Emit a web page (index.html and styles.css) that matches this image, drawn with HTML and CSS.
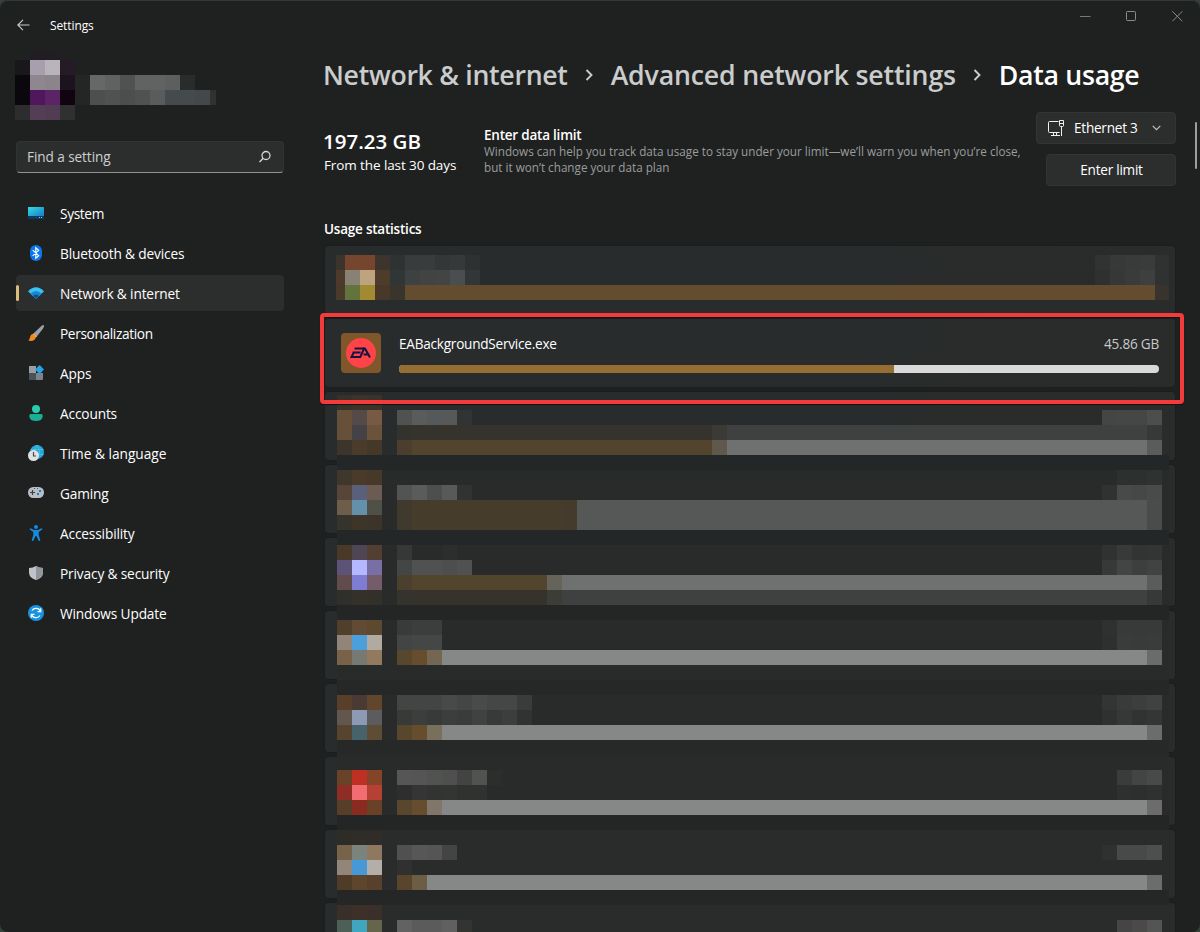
FILE: index.html
```html
<!DOCTYPE html>
<html lang="en">
<head>
<meta charset="utf-8">
<title>Settings</title>
<link rel="stylesheet" href="styles.css">
</head>
<body>
<div class="window">
  <aside class="sidebar">
    <header class="titlebar">
      <svg class="back" width="14" height="12" viewBox="0 0 14 12"><path d="M6 .8.8 6 6 11.200M.8 6H12.500" fill="none" stroke="#c9caca" stroke-width="1.100"/></svg>
      <span class="app-name">Settings</span>
    </header>
    <svg class="profile" id="profile" viewBox="15 52 202 69" width="202" height="69" shape-rendering="crispEdges"></svg>
    <div class="search">
      <span class="search-text">Find a setting</span>
      <svg width="14" height="14" viewBox="0 0 14 14"><circle cx="8" cy="5.500" r="4" fill="none" stroke="#d5d6d6" stroke-width="1.300"/><path d="M5 8.500 1.500 12" stroke="#d5d6d6" stroke-width="1.400"/></svg>
    </div>
    <nav class="nav">
      <a class="item tight"><svg viewBox="0 0 16 16"><defs><linearGradient id="gs" x2="1" y2="1"><stop stop-color="#38dbe5"/><stop offset="1" stop-color="#157cc5"/></linearGradient></defs><path fill="url(#gs)" d="M0 2.500Q0 2 .5 2h15q.5 0 .5.500V11H0z"/><path fill="#0b3d60" d="M0 11h16v2.500q0 .500-.5.500H.5Q0 14 0 13.500z"/><path d="M11 12h1v1h-1zM13 12h1v1h-1z" fill="#8cc7e8"/></svg><span>System</span></a>
      <a class="item"><svg viewBox="0 0 16 16"><rect x="2" width="12" height="16" rx="6" fill="#0a78ec"/><path d="m4.700 5.200 6 5.500L7.800 13.200V2.800l2.900 2.500-6 5.500" fill="none" stroke="#fff" stroke-width="1.150"/></svg><span>Bluetooth &amp; devices</span></a>
      <a class="item active"><svg viewBox="0 0 16 16"><path d="M0 6.200Q8-1.800 16 6.200L8 14z" fill="#38c3f3"/><path d="M2.500 8.500Q8 3.500 13.500 8.500L8 14z" fill="#1787d2"/><path d="M5 11q3-2.800 6 0l-3 3z" fill="#124f91"/></svg><span>Network &amp; internet</span></a>
      <a class="item tight"><svg viewBox="0 0 16 16"><path d="M15.700.3c.9.900-.2 2.400-1 3.700L9 11.300 5.700 8.200 12.300 2c1.200-1 2.400-2.400 3.400-1.700z" fill="#9aa1a6"/><path d="m5.700 8.200 3.300 3.100-1.500 1.400L4.500 9.500z" fill="#d6d8d9"/><path d="M4.800 9c1.800 0 3 1.500 2.900 3.200C7.500 15.300 4 16.700.3 15.500 2.500 14 1.600 9.400 4.800 9z" fill="#f18a1d"/></svg><span>Personalization</span></a>
      <a class="item"><svg viewBox="0 0 16 16"><path d="M1 1h7v7H1z" fill="#979ea5"/><path d="M1 8h7v7H2q-1 0-1-1z" fill="#4b5156"/><path d="M8 8h7v6q0 1-1 1H8z" fill="#7b838b"/><rect x="8.400" y="1.300" width="6.400" height="6.400" rx=".8" transform="rotate(45 11.600 4.500)" fill="#26a4ea"/></svg><span>Apps</span></a>
      <a class="item"><svg viewBox="0 0 16 16"><circle cx="8" cy="4" r="4" fill="#2bcbb0"/><path d="M2.500 9h11Q15 9 14.700 11.500 14 16 8 16T1.300 11.500Q1 9 2.500 9z" fill="#1bae97"/></svg><span>Accounts</span></a>
      <a class="item loose"><svg viewBox="0 0 16 16"><circle cx="9" cy="7" r="7" fill="#25a7d9"/><path d="M9 0q-5 7 0 14M9 0q5 7 0 14M2.500 4.500h13M2.500 9.500h13" fill="none" stroke="#50c4e5" stroke-width=".8"/><circle cx="5.500" cy="10.500" r="5.500" fill="#e0e1e2"/><path d="M5.500 7v4H8" fill="none" stroke="#44494d" stroke-width="1.200"/></svg><span>Time &amp; language</span></a>
      <a class="item"><svg viewBox="0 0 16 16"><rect y="2" width="16" height="11" rx="5.200" fill="#b8bec4"/><path d="M4.500 5v5M2 7.500h5" stroke="#3b4146" stroke-width="1.200"/><path d="M6 3h1v1H6zM9 3h1v1H9z" fill="#4a5157"/><path d="M11 5h2v2h-2zM9 8h2v2H9z" fill="#1680d0"/></svg><span>Gaming</span></a>
      <a class="item"><svg viewBox="0 0 16 16"><circle cx="8" cy="2" r="2" fill="#168add"/><path d="M2.600 3.300 6 5h4l3.400-1.700q1.200 0 .8 1.200L10.700 7v3l1.600 5.200q-.5 1.100-1.700.6L8.500 11h-1l-2.100 4.800q-1.200.5-1.700-.6L5.300 10V7L1.800 4.500q-.4-1.200.8-1.200z" fill="#168add"/></svg><span>Accessibility</span></a>
      <a class="item"><svg viewBox="0 0 16 16"><path d="M8 1q3 2 7 2v4.500Q15 13 8 15 1 13 1 7.500V3q4 0 7-2z" fill="#c0c4c9"/><path d="M8 1q3 2 7 2v4.500Q15 13 8 15z" fill="#92979d"/></svg><span>Privacy &amp; security</span></a>
      <a class="item"><svg viewBox="0 0 16 16"><circle cx="8" cy="8" r="8" fill="#1693e3"/><path d="M12.500 6.500A4.800 4.800 0 0 0 4 5.500m-.5 4A4.800 4.800 0 0 0 12 10.500M12.700 3.300v3.300H9.500M3.300 12.700V9.400h3.200" fill="none" stroke="#fff" stroke-width="1.200"/></svg><span>Windows Update</span></a>
    </nav>
  </aside>
  <main class="main">
    <div class="caption-buttons">
      <svg width="11" height="11" viewBox="0 0 11 11"><path d="M0 5.500h10.500" stroke="#777979"/></svg>
      <svg width="11" height="11" viewBox="0 0 11 11"><rect x=".5" y=".5" width="9" height="9" rx=".8" fill="none" stroke="#898a8a"/></svg>
      <svg width="11" height="11" viewBox="0 0 11 11"><path d="m.3.300 10 10m0-10-10 10" stroke="#898a8a"/></svg>
    </div>
    <h1 class="crumbs">
      <span class="c1">Network &amp; internet</span>
      <svg class="sep" width="9" height="12" viewBox="0 0 9 12"><path d="m1.500 1 5 5-5 5" fill="none" stroke="#cbcccc" stroke-width="1.900"/></svg>
      <span class="c2">Advanced network settings</span>
      <svg class="sep" width="9" height="12" viewBox="0 0 9 12"><path d="m1.500 1 5 5-5 5" fill="none" stroke="#cbcccc" stroke-width="1.900"/></svg>
      <span class="c3">Data usage</span>
    </h1>
    <section class="summary">
      <div class="total"><div class="amount">197.23 GB</div><div class="period">From the last 30 days</div></div>
      <div class="limit"><div class="limit-title">Enter data limit</div><p><span>Windows can help you track data usage to stay under your limit—we’ll warn you when you’re close,</span><br><span>but it won’t change your data plan</span></p></div>
      <div class="actions">
        <button class="btn adapter"><svg width="17" height="17" viewBox="0 0 17 17"><path d="M10.500 1.500H1.500q-1 0-1 1v9q0 1 1 1h10M5.500 12.500v3M3 15.500h9M8.500 12.500v3M11.500.5h4v5q0 1-1 1h-2q-1 0-1-1zM12 3.500h3M13.500 6.500V16" fill="none" stroke="#eeefef"/></svg><span>Ethernet 3</span><svg width="9" height="6" viewBox="0 0 9 6"><path d="m.7.800 3.800 3.800L8.300.8" fill="none" stroke="#c5c6c6" stroke-width="1.100"/></svg></button>
        <button class="btn enter"><span>Enter limit</span></button>
      </div>
    </section>
    <h2 class="stats-title">Usage statistics</h2>
    <section class="list">
      <div class="card"></div>
      <div class="card featured">
        <div class="app-icon"><svg width="30" height="30" viewBox="0 0 30 30"><circle cx="15" cy="15" r="15" fill="#ff4448"/><path d="M8.500 10.500h9M6.500 14.500h8M18.500 9.500 14.300 18.900H5.500L7.500 15M18.700 10l5.300 9.500M17.500 16.500h6" fill="none" stroke="#141345" stroke-width="2"/></svg></div>
        <div class="usage">
          <div class="usage-head"><span class="exe">EABackgroundService.exe</span><span class="size">45.86 GB</span></div>
          <div class="bar"><div class="fill"></div></div>
        </div>
      </div>
      <div class="card"></div><div class="card"></div><div class="card"></div><div class="card"></div><div class="card"></div><div class="card"></div><div class="card"></div><div class="card"></div>
      <svg class="mosaic" id="mosaic" viewBox="325 246 850 686" width="850" height="686" shape-rendering="crispEdges"></svg>
      <div class="highlight"></div>
    </section>
  </main>
  <div class="scroll-thumb"></div>
</div>
<script src="mosaic.js"></script>
</body>
</html>
```

FILE: styles.css
```css
* { box-sizing: border-box; }
body { margin: 0; background: #35423a; font-family: "Open Sans", "Noto Sans", sans-serif; color: #fff; }
.window { position: relative; display: flex; width: 1200px; height: 932px; overflow: hidden; border-radius: 8px; background: #1f2121; box-shadow: inset 0 1px #343838; }
.sidebar { width: 300px; flex: none; padding-left: 16px; }
.titlebar { display: flex; align-items: center; height: 48px; padding: 1px 0 0 1px; }
.back { margin-right: 19px; }
.app-name { padding-top: 1px; font-size: 12px; letter-spacing: -.1px; }
.profile { display: block; margin: 4px 0 0 -1px; }
.search { display: flex; align-items: center; justify-content: space-between; width: 268px; height: 32px; margin-top: 20px; padding: 0 11px 0 10px; border: 1px solid #303333; border-bottom-color: #929494; border-radius: 4px; background: #2c2e2e; font-size: 13.600px; letter-spacing: -.08px; color: #cecfcf; }
.search-text { padding-bottom: 2px; }
.nav { display: flex; flex-direction: column; gap: 4px; margin-top: 22px; }
.item { position: relative; display: flex; align-items: center; gap: 16px; width: 268px; height: 36px; padding: 2px 0 0 12px; border-radius: 4px; font-size: 13.700px; letter-spacing: -.15px; white-space: nowrap; }
.item.tight { letter-spacing: -.36px; }
.item.loose { letter-spacing: 0; }
.item svg { width: 16px; height: 16px; margin-top: -2px; }
.item span { padding-bottom: 2px; }
.active { background: #2c2e2e; }
.active::before { content: ""; position: absolute; left: 0; top: 10px; width: 3px; height: 16px; border-radius: 2px; background: #d9bd7b; }
.main { flex: none; width: 876px; padding-left: 24px; }
.caption-buttons { display: flex; gap: 35px; width: 103px; height: 32px; margin-left: 756px; align-items: center; }
.caption-buttons svg { flex: none; }
.crumbs { display: flex; align-items: center; height: 40px; margin: 23px 0 0 -1px; font-size: 26.700px; font-weight: 600; line-height: 40px; color: #cbcccc; white-space: nowrap; }
.c1 { letter-spacing: -.3px; }
.c2 { letter-spacing: -.17px; }
.c3 { color: #fff; letter-spacing: -.3px; }
.sep { margin: 0 17px; flex: none; }
.summary { display: flex; height: 90px; margin-top: 17px; white-space: nowrap; }
.total { width: 161px; margin-left: -1px; padding-top: 16px; }
.amount { font-size: 20.500px; font-weight: 600; line-height: 27px; }
.period { padding-left: 1px; font-size: 13.500px; letter-spacing: -.1px; line-height: 20px; }
.limit { width: 540px; padding-top: 12px; }
.limit-title { font-size: 13.500px; font-weight: 600; letter-spacing: -.22px; line-height: 22px; }
.limit p { margin: -3px 0 0; font-size: 11.700px; line-height: 16px; color: #9b9d9d; }
.actions { display: flex; flex-direction: column; align-items: flex-end; gap: 10px; width: 152px; }
.btn { display: flex; align-items: center; height: 32px; padding: 0; border: 1px solid #333535; border-radius: 4px; background: #2c2e2e; color: #fff; font: 13.600px "Open Sans", sans-serif; letter-spacing: -.25px; white-space: nowrap; }
.btn span { padding-bottom: 2px; }
.adapter { width: 140px; padding-left: 11px; gap: 9px; }
.adapter svg:last-child { margin-left: 5px; }
.enter { width: 130px; padding-left: 1px; justify-content: center; }
.stats-title { height: 20px; margin: 16px 0 8px; font-size: 13.500px; letter-spacing: -.22px; line-height: 22px; font-weight: 600; }
.list { position: relative; display: flex; flex-direction: column; gap: 5px; width: 850px; height: 686px; margin-left: 1px; }
.card { flex: none; height: 68px; border-radius: 4px; background: linear-gradient(90deg, #292c2d, #292c2c 60%, #2a2b2b); box-shadow: 0 0 0 1px #1c1e1e; }
.featured { display: flex; align-items: flex-start; gap: 18px; padding: 14px 16px; }
.app-icon { display: grid; place-items: center; width: 40px; height: 40px; border-radius: 4px; background: #80562b; }
.usage { flex: 1; }
.usage-head { display: flex; justify-content: space-between; height: 32px; line-height: 22px; font-size: 13.600px; letter-spacing: -.24px; }
.size { color: #c7c9c9; }
.bar { height: 8px; overflow: hidden; border-radius: 4px; background: #d9d9d9; }
.fill { width: 495px; height: 8px; background: #966d33; }
.mosaic { position: absolute; left: 0; top: 0; }
.highlight { position: absolute; left: -5px; top: 67px; width: 864px; height: 91px; border: 4px solid #f33b3b; border-radius: 4px; box-shadow: 0 1px 1px #141414, inset 0 1px 1px #101111; }
.scroll-thumb { position: absolute; left: 1195px; top: 122px; width: 2px; height: 47px; border-radius: 1px; background: #9c9e9e; }
```

FILE: mosaic.js
```javascript
const NS = "http://www.w3.org/2000/svg";

function rect(svg, x, y, w, h, fill) {
  const r = document.createElementNS(NS, "rect");
  r.setAttribute("x", x);
  r.setAttribute("y", y);
  r.setAttribute("width", w);
  r.setAttribute("height", h);
  r.setAttribute("fill", "#" + fill);
  svg.appendChild(r);
}

// A run is a row of 15px cells; "-" leaves a cell open.
function run(svg, x, y, colors) {
  colors.split(" ").forEach((c, i) => { if (c !== "-") rect(svg, x + i * 15, y, 15, 15, c); });
}

const p = document.getElementById("profile");
rect(p, 30, 52, 30, 8, "221c25");
run(p, 15, 60, "18171a a79fac b9b4bb 241b27");
run(p, 15, 75, "0a080d 8e8790 8b848b 1d131f 242625 666867 606261 505251 616362 616362 5d5f5e 292c2d");
run(p, 15, 90, "0a080d 50175c 5b2467 110310 242625 4d4f4e 505251 4c4e4d 505251 5a5c5b 454a4c 454a4c 45484a");
rect(p, 210, 90, 6, 15, "303232");
run(p, 15, 105, "2d2d2f 533e55 513c53 303031");

const m = document.getElementById("mosaic");

// Backdrop strips: y, height, colour
[
  [455, 15, "242727"], [470, 60, "292b2b"], [530, 15, "242727"], [545, 60, "292b2b"],
  [605, 15, "242626"], [620, 60, "292b2a"], [680, 15, "262727"], [695, 45, "292b2b"],
  [740, 15, "272928"], [755, 60, "292b2a"], [815, 15, "242626"], [830, 60, "2a2b2b"],
  [890, 15, "252626"], [905, 27, "2a2b2b"]
].forEach(([y, h, c]) => rect(m, 337, y, 832, h, c));

// First card
[["3c342c", 255], ["4c3b2a", 270], ["4a3a2a", 285]].forEach(([c, y]) => rect(m, 336, y, 9, 15, c));
run(m, 345, 255, "76452e 76452e 3d352d 2e3233 393c3d 393c3d 333738 36393a 2e3132");
run(m, 345, 270, "888176 bea37f 4d3c2a 303536 3e4142 424444 434544 4b4e4f 333637");
run(m, 345, 285, "62743c a28a30 483829 39352d");
rect(m, 405, 285, 750, 15, "644c2e");
run(m, 1095, 255, "313332 373938 393b3a 3a3c3b");
run(m, 1095, 270, "2f3130 363837 3a3c3b 3e403f");
rect(m, 1155, 255, 14, 30, "303231");
rect(m, 1155, 285, 14, 15, "38332c");

// App icons: y of the top row, then rows of three cells
[
  [395, "36322a 3c3329 3b332a", "665039 544b48 765a42", "665039 444246 6b523b", "3c352b 4b3b2a 443829"],
  [470, "3f362c 493a2a 473929", "57453a 5a5f7a 6b5b53", "6d5d4b 6390aa 4f5148", "36332c 3e3529 3c3429"],
  [545, "493928 4e4555 533f31", "5c5377 b4b9ff 786fa4", "624b4d 7e7dd3 755c6a", "2f302b 34302a 33302a"],
  [620, "50402b 624b34 5d4830", "918579 4ba0db b0aaa0", "78634a 767a72 917a5e"],
  [695, "583f29 4a3a34 62462b", "62574f 8e99b4 5c5c5f", "57442e 46636b 5d4d35"],
  [770, "6a4228 be3023 854427", "8e2d24 f26d72 b74035", "573e28 8a2b20 6a4027"],
  [830, "2e2c27 302d28 302d28", "77624a 7a837d 8f7860", "918679 4698d6 b3afa8", "4e3b28 5e462c 57402c"],
  [905, "382f29 3c3029 3a3029", "4c6058 40a5bf 65654b"]
].forEach(([y, ...rows]) => rows.forEach((r, i) => run(m, 337, y + i * 15, r)));

// App names
run(m, 397, 410, "505252 5a5c5c 54595b 575959 303435");
run(m, 397, 485, "525453 5a5c5b 4d4f4e 585a59 313332");
run(m, 397, 545, "363838 - - 2c2e2e");
run(m, 397, 560, "444645 505251 505251 4d4f4e 505251");
run(m, 397, 620, "393b3a 3c3e3d 3c3e3d");
run(m, 397, 635, "434544 454746 454746");
run(m, 397, 695, "434542 434545 434545 484a49 444645 494b4a 454746 454746 3a3c3b");
run(m, 397, 710, "383a37 3c3e3d 383a37 3c3e3d 3a3c3b 40423f 383a39 3c3e3d 313332");
run(m, 397, 770, "565656 555555 505350 4f4f50 444344 50534f 2d2e2b");
run(m, 397, 785, "2d2e2d 353536 323431 333532 303230 303230");
run(m, 397, 845, "505050 575757 555555 444444");
run(m, 397, 860, "303030");
run(m, 397, 920, "626262 5b5b5b 5b5b5b 606060 333332");

// Data amounts
run(m, 1102, 410, "444645 454746 454746 4c4e4d");
run(m, 1117, 470, "2e3030 2e3030 303231");
run(m, 1102, 485, "303231 484a49 464847 494b4a");
run(m, 1102, 545, "303231 383a39 323433 333534");
run(m, 1102, 560, "373938 434544 3d3f3e 414342");
run(m, 1102, 620, "2f3130 383a39 383a39 383a39");
run(m, 1102, 635, "2e302f 3a3c3b 393b3a 3a3c3b");
run(m, 1102, 695, "333534 393b3a 3c3e3d 404241");
run(m, 1102, 710, "2f3130 363837 313332 343635");
run(m, 1117, 770, "3a3c3b 434544 484a49");
run(m, 1117, 785, "2e302f 2d2f2e 2f3130");
run(m, 1102, 845, "2f3130 484a49 484a49 4d4f4e");
run(m, 1117, 920, "454545 4c4949 535454");

// Bars: y, height, then [x, colour] stops ending at 1162
[
  [425, 15, [397, "34322d"], [412, "36332c"], [712, "3b3a34"], [727, "3f4140"], [1147, "373938"]],
  [440, 15, [397, "4b3e2e"], [412, "53442e"], [712, "5f584c"], [727, "6e7170"], [1147, "5a5c5b"]],
  [500, 30, [397, "40392d"], [412, "463c2b"], [562, "453b2d"], [577, "565857"], [1147, "4a4c4b"]],
  [575, 15, [397, "4b3f2e"], [412, "53442e"], [547, "66635b"], [562, "6e7170"], [1147, "5a5c5b"]],
  [590, 15, [397, "34332d"], [412, "36332c"], [547, "3c3d37"], [562, "3f4140"], [1147, "373938"]],
  [650, 15, [397, "58462d"], [412, "664d2d"], [427, "736753"], [442, "868887"], [1147, "6a6c6b"]],
  [725, 15, [397, "58462d"], [412, "664d2d"], [427, "796f5d"], [442, "868887"], [1147, "6c6c6c"]],
  [800, 15, [397, "58462d"], [412, "664d2d"], [427, "807669"], [442, "868887"], [1147, "6c6c6c"]],
  [875, 15, [397, "59452c"], [412, "6c5d45"], [427, "868887"], [1147, "6c6c6c"]]
].forEach(([y, h, ...stops]) => stops.forEach(([x, c], i) => {
  const end = i + 1 < stops.length ? stops[i + 1][0] : 1162;
  rect(m, x, y, end - x, h, c);
}));
```
